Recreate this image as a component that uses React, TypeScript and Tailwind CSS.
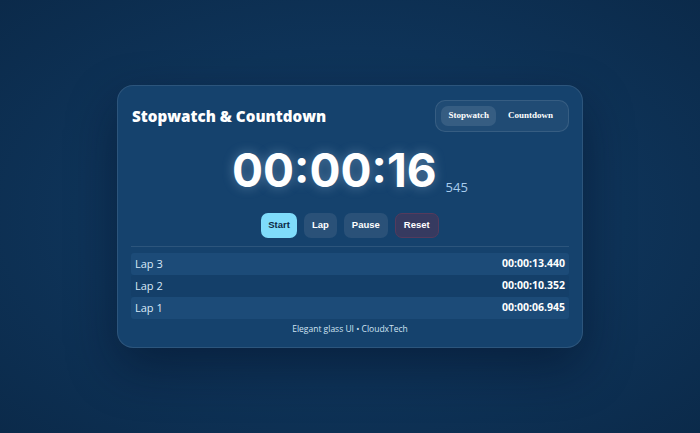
import React from "react";

const laps = [
  { name: "Lap 3", time: "00:00:13.440" },
  { name: "Lap 2", time: "00:00:10.352" },
  { name: "Lap 1", time: "00:00:06.945" },
];

export default function App() {
  return (
    <div
      className="w-[700px] h-[433px] flex items-center justify-center bg-[radial-gradient(ellipse_at_center,#113a63_0%,#0e3358_55%,#0b2a4a_100%)]"
      style={{ fontFamily: '"Open Sans", "Noto Sans", sans-serif' }}
    >
      <div className="w-[466px] h-[263px] rounded-[16px] border border-white/10 bg-[#15426d] shadow-[0_20px_50px_rgba(0,10,30,0.45)] px-[13px] pt-[14px] flex flex-col">
        {/* header */}
        <div className="flex items-center justify-between">
          <h1 className="text-[15.2px] font-extrabold text-white leading-none mt-[2px] pl-[1px]">
            Stopwatch &amp; Countdown
          </h1>
          <div className="flex items-center gap-[2px] rounded-[10px] border border-white/10 bg-white/5 p-[5px]">
            <button
              className="h-[20px] px-[7px] rounded-[7px] bg-white/10 text-white text-[9px] font-bold"
              style={{ fontFamily: '"Liberation Serif", serif' }}
            >
              Stopwatch
            </button>
            <button
              className="h-[20px] px-[10px] rounded-[7px] text-white text-[9px] font-bold"
              style={{ fontFamily: '"Liberation Serif", serif' }}
            >
              Countdown
            </button>
          </div>
        </div>

        {/* clock */}
        <div className="flex items-end justify-center mt-[15px]">
          <span
            className="text-[46px] font-bold text-white leading-none [text-shadow:0_0_12px_rgba(200,230,255,0.35)]"
            style={{ fontFamily: "Inter, sans-serif" }}
          >
            00:00:16
          </span>
          <span className="text-[13px] text-[#a9cdee] ml-[9px] mb-[-1px] leading-none">545</span>
        </div>

        {/* controls */}
        <div
          className="flex justify-center gap-[7px] mt-[20px]"
          style={{ fontFamily: '"Liberation Sans", sans-serif' }}
        >
          <button className="h-[25px] px-[7px] rounded-[7px] bg-[#7fdcfb] text-[#0c2a45] text-[9.5px] font-bold">
            Start
          </button>
          <button className="h-[25px] px-[8px] rounded-[7px] bg-[#2a5178] text-white text-[9.5px] font-bold">
            Lap
          </button>
          <button className="h-[25px] px-[8px] rounded-[7px] bg-[#2a5178] text-white text-[9.5px] font-bold">
            Pause
          </button>
          <button className="h-[25px] px-[8px] rounded-[7px] bg-[#363a60] border border-[#553a5c] text-white text-[9.5px] font-bold">
            Reset
          </button>
        </div>

        <div className="h-px bg-white/10 mt-[8px]" />

        {/* laps */}
        <div className="mt-[6px] flex flex-col">
          {laps.map((l, i) => (
            <div
              key={l.name}
              className={`flex items-center justify-between h-[22px] px-[4px] rounded-[3px] ${
                i % 2 === 0 ? "bg-[#1c4b78]" : "bg-[#143f69]"
              }`}
            >
              <span className="text-[11px] text-[#d7e8f7]">{l.name}</span>
              <span className="text-[10.5px] font-bold text-white">{l.time}</span>
            </div>
          ))}
        </div>

        <div className="text-center text-[8.5px] text-[#cfe2f3] mt-[4px]">Elegant glass UI • CloudxTech</div>
      </div>
    </div>
  );
}
